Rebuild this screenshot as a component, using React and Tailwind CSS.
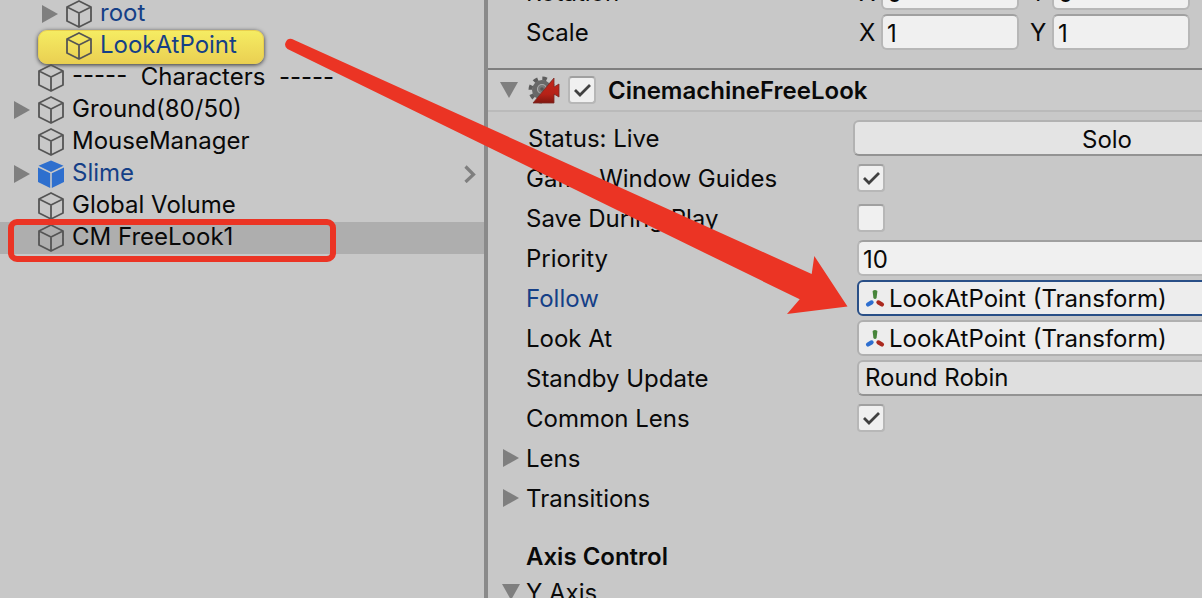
import React from 'react';

const CubeIcon = ({ prefab }) => (
  <svg viewBox="0 0 26 28" className="h-7 w-[26px] shrink-0" fill="none" strokeLinejoin="round">
    {prefab ? (
      <>
        <path d="M13 .5 25.5 5.8 13 12 .5 5.8Z" fill="#2e6fce" />
        <path d="M0 7.5 12.2 13.2V28L0 22Z" fill="#2e6fce" />
        <path d="M26 7.5 13.8 13.2V28L26 22Z" fill="#2e6fce" />
      </>
    ) : (
      <path d="M13 1 25 7V21L13 27 1 21V7ZM1 7 13 13 25 7M13 13V27" stroke="#555" strokeWidth="1.8" />
    )}
  </svg>
);

const Foldout = ({ open }) => (
  <svg viewBox="0 0 18 18" className="h-[18px] w-[18px] shrink-0" fill="#7f7f7f">
    <path d={open ? 'M0 1H18L9 17Z' : 'M1 0V18L17 9Z'} />
  </svg>
);

const TransformIcon = () => (
  <svg viewBox="0 0 20 20" className="h-5 w-5 shrink-0">
    <path d="M7.6 3Q10 1 12.4 3L11.6 10Q10 11.8 8.4 10Z" fill="#47853b" />
    <path d="M3 16.5 6.6 14.4" stroke="#2e6fd0" strokeWidth="4.2" strokeLinecap="round" />
    <path d="M13.4 14.4 17 16.5" stroke="#ab2a20" strokeWidth="4.2" strokeLinecap="round" />
  </svg>
);

const CinemachineIcon = () => (
  <svg viewBox="0 0 32 28" className="h-7 w-8 shrink-0">
    <defs>
      <linearGradient id="camera" x1="0" y1="0" x2="0" y2="1">
        <stop offset="0" stopColor="#c5261a" />
        <stop offset=".65" stopColor="#b52218" />
        <stop offset="1" stopColor="#801710" />
      </linearGradient>
    </defs>
    <circle cx="14" cy="14" r="11.5" fill="none" stroke="#5d5d5d" strokeWidth="4" strokeDasharray="4.5 4.53" />
    <circle cx="14" cy="14" r="10" fill="#686868" />
    <circle cx="14" cy="13" r="4.5" fill="#777" stroke="#aaa" strokeWidth="1.2" />
    <circle cx="14" cy="13" r="1.8" fill="#555" />
    <path d="M26 2V11L31 8V21L26 18V27H5Z" fill="url(#camera)" stroke="#7b2a24" strokeWidth=".8" />
  </svg>
);

const Checkbox = ({ id, label, checked }) => (
  <span className="relative block h-7 w-7 shrink-0">
    <input
      id={id}
      type="checkbox"
      aria-label={label}
      defaultChecked={checked}
      className="peer block h-7 w-7 appearance-none rounded border-2 border-[#b7b7b7] border-t-[#a0a0a0] bg-[#f0f0f0]"
    />
    <svg viewBox="0 0 28 28" className="pointer-events-none absolute inset-0 hidden h-7 w-7 peer-checked:block" fill="none">
      <path d="M7 14 12 19 22 9" stroke="#414141" strokeWidth="2.8" />
    </svg>
  </span>
);

const fieldStyle =
  'block h-9 w-full min-w-0 rounded-md border-2 border-[#b7b7b7] border-t-[#a0a0a0] bg-[#f0f0f0] px-1 pt-0.5 text-[#090909]';

const objectStyle =
  'flex h-9 w-full items-center gap-1 rounded-md border-2 bg-[#ededed] px-1.5 text-left';

const hierarchy = [
  { name: 'root', nested: true, foldout: true, blue: true },
  { name: 'LookAtPoint', nested: true, blue: true, highlighted: true },
  { name: '-----  Characters  -----' },
  { name: 'Ground(80/50)', foldout: true },
  { name: 'MouseManager' },
  { name: 'Slime', foldout: true, blue: true, prefab: true },
  { name: 'Global Volume' },
  { name: 'CM FreeLook1', selected: true },
];

const HierarchyRow = ({ item }) => (
  <li
    className={`relative isolate flex h-8 items-center gap-2 pr-2 ${item.nested ? 'pl-[41px]' : 'pl-[13px]'} ${
      item.selected ? 'bg-[#aeaeae]' : ''
    }`}
  >
    {item.highlighted && (
      <span className="absolute top-0 left-[38px] -z-10 h-[34px] w-[226px] rounded-[9px] border border-[#e8cf4e] bg-linear-to-b from-[#f5ec62] to-[#ead052] shadow-[0_1px_4px_rgba(0,0,0,0.75)]" />
    )}
    <span className="flex w-[17px] shrink-0">{item.foldout && <Foldout />}</span>
    <CubeIcon prefab={item.prefab} />
    <span className={`-mt-0.5 whitespace-pre ${item.blue ? 'text-[#153f87]' : ''}`}>{item.name}</span>
    {item.prefab && (
      <svg viewBox="0 0 12 18" className="ml-auto h-[18px] w-3" fill="none">
        <path d="M1.5 1.5 9.5 9.5 1.5 17" stroke="#7f7f7f" strokeWidth="3.2" />
      </svg>
    )}
    {item.selected && (
      <span className="absolute -top-[3px] left-2 h-[43px] w-[328px] rounded-[9px] border-6 border-[#eb3424]" />
    )}
  </li>
);

const Row = ({ id, label, blue, children }) => (
  <div className="flex h-9 items-center">
    <label htmlFor={id} className={`w-[331px] shrink-0 pt-0.5 ${blue ? 'text-[#153f87]' : ''}`}>
      {label}
    </label>
    <div className="min-w-0 flex-1">{children}</div>
  </div>
);

const VectorRow = ({ name, value }) => (
  <div className="flex h-9 items-center">
    <span className="w-[331px] shrink-0 pt-0.5">{name}</span>
    <div className="grid flex-1 grid-cols-3 gap-[9px]">
      {['X', 'Y'].map((axis) => (
        <label key={axis} className="flex items-center">
          <span className="w-6 shrink-0 pt-0.5 pl-0.5">{axis}</span>
          <input aria-label={`${name} ${axis}`} defaultValue={value} className={fieldStyle} />
        </label>
      ))}
    </div>
  </div>
);

const Section = ({ name, open }) => (
  <button className="-ml-6 flex h-9 items-center gap-1.5 text-left">
    <Foldout open={open} />
    <span className="pt-0.5">{name}</span>
  </button>
);

const App = () => {
  return (
    <div className="relative flex h-screen overflow-hidden bg-[#c8c8c8] font-['Inter','Liberation_Sans',sans-serif] text-2xl text-[#090909]">
      <aside className="w-[488px] shrink-0 border-r-4 border-[#8a8a8a]">
        <ul className="-mt-0.5">
          {hierarchy.map((item) => (
            <HierarchyRow key={item.name} item={item} />
          ))}
        </ul>
      </aside>

      <main className="min-w-0 flex-1 overflow-hidden">
        <div className="min-w-[873px]">
          <div className="-mt-[26px] flex flex-col gap-1 pb-[18px] pl-[38px]">
            <VectorRow name="Rotation" value="0" />
            <VectorRow name="Scale" value="1" />
          </div>

          <header className="flex h-11 items-center border-t-2 border-b-2 border-t-[#7f7f7f] border-b-[#bababa] bg-[#cbcbcb] pl-3">
            <Foldout open />
            <span className="ml-2.5 flex items-center gap-2">
              <CinemachineIcon />
              <Checkbox label="Enable CinemachineFreeLook" checked />
            </span>
            <h2 className="ml-3 pt-0.5 font-semibold">CinemachineFreeLook</h2>
          </header>

          <div className="flex flex-col gap-1 pt-2 pl-[38px]">
            <div className="flex h-9 items-center">
              <span className="w-[327px] shrink-0 pt-0.5 pl-0.5">Status: Live</span>
              <button className="h-9 flex-1 rounded-md border-2 border-[#b2b2b2] border-b-[#939393] bg-[#e4e4e4] pt-0.5">
                Solo
              </button>
            </div>
            <Row id="guides" label="Game Window Guides">
              <Checkbox id="guides" checked />
            </Row>
            <Row id="save" label="Save During Play">
              <Checkbox id="save" />
            </Row>
            <Row id="priority" label="Priority">
              <input id="priority" defaultValue="10" className={fieldStyle} />
            </Row>
            <Row id="follow" label="Follow" blue>
              <button id="follow" className={`${objectStyle} border-[#294f87]`}>
                <TransformIcon />
                <span className="pt-0.5">LookAtPoint (Transform)</span>
              </button>
            </Row>
            <Row id="look-at" label="Look At">
              <button id="look-at" className={`${objectStyle} border-[#b0b0b0]`}>
                <TransformIcon />
                <span className="pt-0.5">LookAtPoint (Transform)</span>
              </button>
            </Row>
            <Row id="standby" label="Standby Update">
              <select
                id="standby"
                className="block h-9 w-full appearance-none rounded-md border-2 border-[#b2b2b2] border-b-[#939393] bg-[#dfdfdf] px-1.5 leading-8"
              >
                <option>Round Robin</option>
              </select>
            </Row>
            <Row id="lens" label="Common Lens">
              <Checkbox id="lens" checked />
            </Row>
            <Section name="Lens" />
            <Section name="Transitions" />
          </div>

          <div className="flex flex-col pt-[22px] pl-[38px]">
            <h3 className="flex h-9 items-center pt-0.5 font-semibold">Axis Control</h3>
            <Section name="Y Axis" open />
          </div>
        </div>
      </main>

      <svg viewBox="0 0 1202 598" className="pointer-events-none absolute top-0 left-0 h-[598px] w-[1202px]">
        <path
          d="M292 39 811.7 274 814.3 256 847.5 306.5 787 314 799.7 299.3 287.5 49A5.6 5.6 0 0 1 292 39Z"
          fill="#eb3424"
        />
      </svg>
    </div>
  );
};

export default App;
